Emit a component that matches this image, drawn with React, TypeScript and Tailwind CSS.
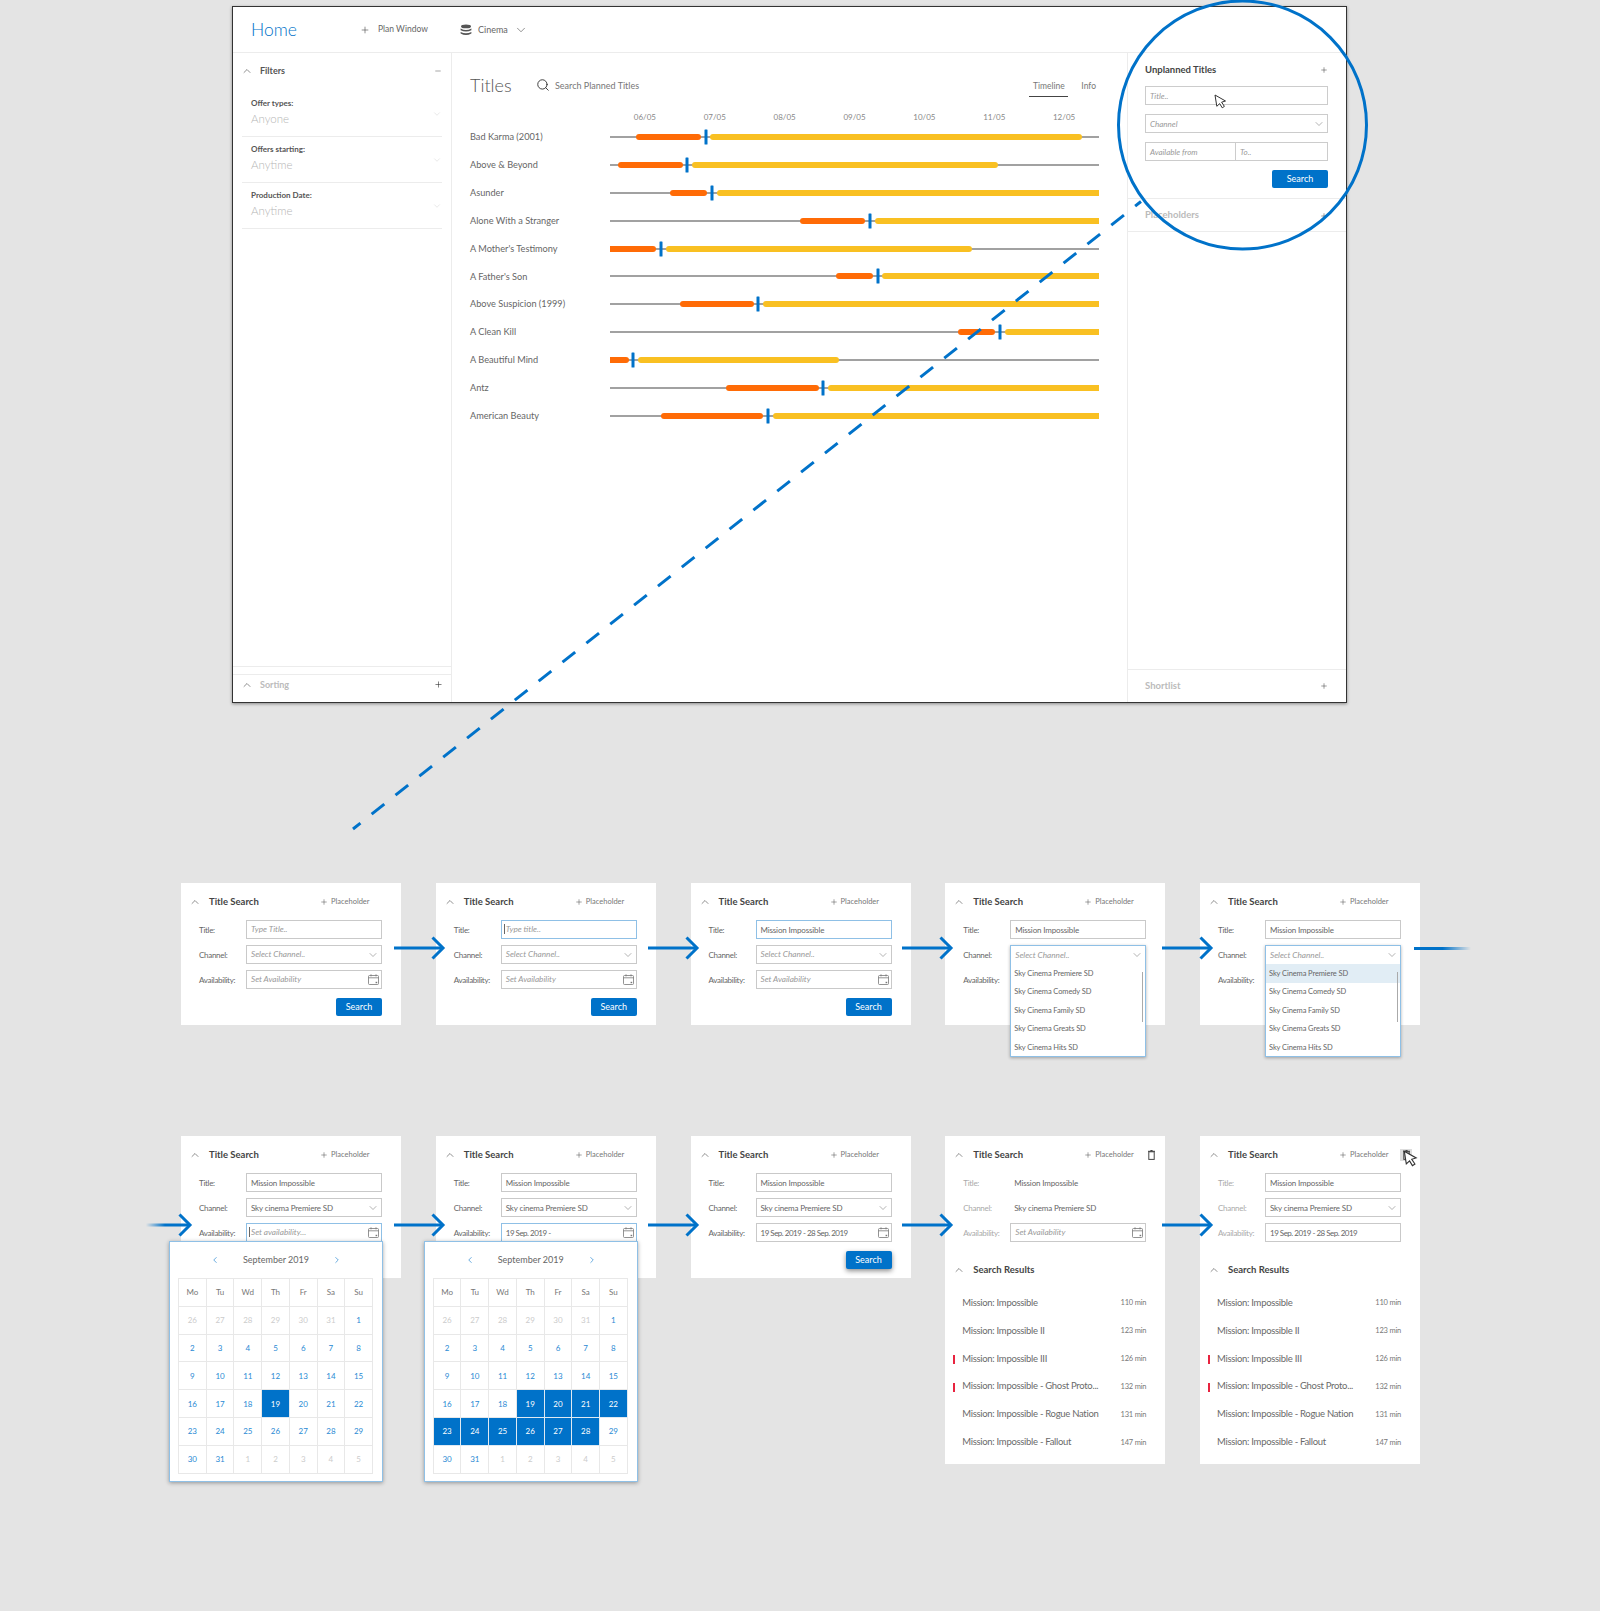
import { ChevronDown, ChevronLeft, ChevronRight, ChevronUp, Minus, Plus, Search } from 'lucide-react';
import type { ReactNode } from 'react';

const BLUE = '#0072c9';

const titles: [string, number, number, number, number, number][] = [
  ['Bad Karma (2001)', 636, 701, 706, 710, 1082],
  ['Above & Beyond', 618, 683, 687, 692, 998],
  ['Asunder', 670, 707, 712, 717, 1110],
  ['Alone With a Stranger', 800, 865, 870, 875, 1110],
  ["A Mother's Testimony", 600, 656, 661, 666, 972],
  ["A Father's Son", 836, 873, 878, 882, 1110],
  ['Above Suspicion (1999)', 680, 754, 758, 763, 1110],
  ['A Clean Kill', 958, 995, 1000, 1005, 1110],
  ['A Beautiful Mind', 600, 629, 633, 638, 839],
  ['Antz', 726, 819, 823, 828, 1110],
  ['American Beauty', 661, 763, 768, 773, 1110],
];

const dates = ['06/05', '07/05', '08/05', '09/05', '10/05', '11/05', '12/05'];

const channels = ['Sky Cinema Premiere SD', 'Sky Cinema Comedy SD', 'Sky Cinema Family SD', 'Sky Cinema Greats SD', 'Sky Cinema Hits SD'];

const results: [string, string, boolean][] = [
  ['Mission: Impossible', '110 min', false],
  ['Mission: Impossible II', '123 min', false],
  ['Mission: Impossible III', '126 min', true],
  ['Mission: Impossible - Ghost Proto...', '132 min', true],
  ['Mission: Impossible - Rogue Nation', '131 min', false],
  ['Mission: Impossible - Fallout', '147 min', false],
];

function CalendarIcon() {
  return (
    <svg width="11" height="11" viewBox="0 0 11 11" fill="none" stroke="#777" strokeWidth="0.8">
      <rect x="0.5" y="1.5" width="10" height="9" rx="1" />
      <path d="M0.5 3.8H10.5M3 0.3V2.4M8 0.3V2.4" />
      <rect x="7.6" y="7.8" width="1.6" height="1.4" fill="#777" stroke="none" />
    </svg>
  );
}

function TrashIcon() {
  return (
    <svg width="7" height="10" viewBox="0 0 7 10" fill="none" stroke="#444" strokeWidth="1">
      <rect x="0.8" y="1.8" width="5.4" height="7.6" />
      <path d="M0 1.3H7M2.4 0.5H4.6" />
    </svg>
  );
}

function StackIcon() {
  return (
    <svg width="12" height="12" viewBox="0 0 12 12" fill="#555">
      <ellipse cx="6" cy="2.4" rx="5" ry="1.9" />
      <path d="M0.6 4.6Q6 7.6 11.4 4.6V6.2Q6 9 0.6 6.2Z" />
      <path d="M0.6 7.9Q6 10.6 11.4 7.9V9.4Q6 12.6 0.6 9.4Z" />
    </svg>
  );
}

function Cursor({ className, size = 13 }: { className: string; size?: number }) {
  return (
    <svg className={className} width={size} height={size + 2} viewBox="0 0 13 15" fill="#fff" stroke="#333" strokeWidth="1">
      <path d="M1 1L11.5 7L7.6 8.2L10.4 12.4L8.2 13.8L5.7 9.6L2.8 12.3Z" />
    </svg>
  );
}

function Arrow({ className, fade }: { className: string; fade?: boolean }) {
  return (
    <svg className={className} width="52" height="24" viewBox="0 0 52 24" fill="none">
      <defs>
        <linearGradient id="fade-left" x1="0" x2="1" y1="0" y2="0">
          <stop offset="0.1" stopColor={BLUE} stopOpacity="0" />
          <stop offset="0.5" stopColor={BLUE} />
        </linearGradient>
      </defs>
      <rect x="0" y="10.5" width="48" height="3" fill={fade ? 'url(#fade-left)' : BLUE} />
      <path d="M38.5 1.5L49 12L38.5 22.5" stroke={BLUE} strokeWidth="3" />
    </svg>
  );
}

function Field({ label, muted, children }: { label: string; muted?: boolean; children?: ReactNode }) {
  return (
    <div className="flex items-center h-[19px]">
      <span className={`w-[47px] text-[8px] tracking-[-0.3px] ${muted ? 'text-[#aaa]' : 'text-[#666]'}`}>{label}</span>
      {children}
    </div>
  );
}

function Box({ children, focus, right, placeholder }: { children: ReactNode; focus?: boolean; right?: ReactNode; placeholder?: boolean }) {
  return (
    <div
      className={`w-[136px] h-[19px] flex items-center justify-between pl-[4px] pr-[2px] border bg-white ${
        focus ? 'border-[#8fc0e6]' : 'border-[#c9c9c9]'
      } ${placeholder ? 'italic text-[#999] text-[8.2px]' : 'text-[#666] text-[8px] tracking-[-0.15px]'}`}
    >
      <span className="flex items-center whitespace-nowrap">{children}</span>
      {right}
    </div>
  );
}

function Caret() {
  return <span className="w-px h-[10px] bg-[#666] mr-px -ml-[2px]" />;
}

function DateText({ children }: { children: ReactNode }) {
  return <span className="tracking-[-0.5px]">{children}</span>;
}

const Chev = <ChevronDown size={12} strokeWidth={1} color="#666" />;

function CardHeader({ trash, hover }: { trash?: boolean; hover?: boolean }) {
  return (
    <div className="flex items-center h-[12px] pl-[8px] relative">
      <ChevronUp size={12} strokeWidth={1.2} color="#444" />
      <span className="ml-[8px] w-[111px] text-[9.5px] font-bold text-[#444]">Title Search</span>
      <Plus size={8} strokeWidth={1.6} color="#555" className="mr-[3px]" />
      <span className="text-[7.5px] text-[#777]">Placeholder</span>
      {trash && (
        <span className={`absolute left-[200px] top-0 w-[12px] h-[12px] flex items-center justify-center ${hover ? 'bg-[#ddd]' : ''}`}>
          <TrashIcon />
        </span>
      )}
    </div>
  );
}

function Card({ children, header }: { children: ReactNode; header?: ReactNode }) {
  return (
    <div className="relative w-[220px] bg-white pt-[13px] shrink-0">
      {header ?? <CardHeader />}
      {children}
    </div>
  );
}

function Fields({ title, channel, avail }: { title: ReactNode; channel?: ReactNode; avail?: ReactNode }) {
  return (
    <div className="mt-[12px] ml-[18px] flex flex-col gap-[6px]">
      <Field label="Title:">{title}</Field>
      <Field label="Channel:">{channel}</Field>
      <Field label="Availability:">{avail}</Field>
    </div>
  );
}

function SearchButton({ shadow }: { shadow?: boolean }) {
  return (
    <div className="flex justify-end pr-[19px] pt-[9px] pb-[9px]">
      <button className={`w-[46px] h-[18px] rounded-[2px] bg-[#0072c9] text-white text-[9px] ${shadow ? 'shadow-[0_2px_5px_rgba(0,0,0,0.45)]' : ''}`}>
        Search
      </button>
    </div>
  );
}

function Dropdown({ highlight }: { highlight?: boolean }) {
  return (
    <div className="absolute left-[65px] top-[62px] w-[136px] h-[112px] bg-white border border-[#8fc0e6] shadow-[0_1px_3px_rgba(0,0,0,0.3)]">
      <div className="h-[18px] flex items-center justify-between pl-[4px] pr-[2px] italic text-[8.2px] text-[#999]">
        Select Channel..
        {Chev}
      </div>
      {channels.map((c, i) => (
        <div
          key={c}
          className={`h-[18.5px] flex items-center pl-[3px] text-[7.5px] tracking-[-0.1px] text-[#666] ${highlight && i === 0 ? 'bg-[#e1edf5]' : ''}`}
        >
          {c}
        </div>
      ))}
      <span className="absolute right-[2px] top-[26px] w-px h-[50px] bg-[#aaa]" />
    </div>
  );
}

function CalendarPopup({ selected }: { selected: number[] }) {
  const prev = [26, 27, 28, 29, 30, 31];
  const next = [1, 2, 3, 4, 5];
  const days = Array.from({ length: 31 }, (_, i) => i + 1);
  return (
    <div className="absolute left-[-12px] top-[105px] w-[214px] h-[241px] bg-white border border-[#8fc0e6] shadow-[0_1px_4px_rgba(0,0,0,0.35)] pt-[36px] px-[8px]">
      <div className="absolute left-0 right-0 top-[11px] flex items-center justify-center text-[9px] text-[#666]">
        <ChevronLeft size={10} strokeWidth={1.4} color={BLUE} />
        <span className="w-[112px] text-center">September 2019</span>
        <ChevronRight size={10} strokeWidth={1.4} color={BLUE} />
      </div>
      <div className="grid grid-cols-7 w-[195px] border-t border-l border-[#e8e8e8]">
        {['Mo', 'Tu', 'Wd', 'Th', 'Fr', 'Sa', 'Su'].map((d) => (
          <div key={d} className="h-[27.8px] flex items-center justify-center border-r border-b border-[#e8e8e8] text-[8px] text-[#777]">
            {d}
          </div>
        ))}
        {prev.map((d) => (
          <div key={`p${d}`} className="h-[27.8px] flex items-center justify-center border-r border-b border-[#e8e8e8] text-[8px] text-[#ccc]">
            {d}
          </div>
        ))}
        {days.map((d) => (
          <div
            key={d}
            className={`h-[27.8px] flex items-center justify-center border-r border-b text-[8px] ${
              selected.includes(d) ? 'bg-[#0072c9] text-white border-[#dfe9f2]' : 'text-[#2a8ad4] border-[#e8e8e8]'
            }`}
          >
            {d}
          </div>
        ))}
        {next.map((d) => (
          <div key={`n${d}`} className="h-[27.8px] flex items-center justify-center border-r border-b border-[#e8e8e8] text-[8px] text-[#ccc]">
            {d}
          </div>
        ))}
      </div>
    </div>
  );
}

function Results() {
  return (
    <>
      <div className="flex items-center h-[12px] pl-[8px] mt-[22px]">
        <ChevronUp size={12} strokeWidth={1.2} color="#444" />
        <span className="ml-[8px] text-[9.5px] font-bold text-[#444]">Search Results</span>
      </div>
      <div className="mt-[13px] pb-[8px]">
        {results.map(([name, min, flagged]) => (
          <div key={name} className="relative h-[27.9px] flex items-center justify-between pl-[17px] pr-[19px]">
            {flagged && <span className="absolute left-[8px] top-[10px] w-[1.5px] h-[9px] bg-[#e8233f]" />}
            <span className="text-[9.5px] tracking-[-0.3px] text-[#6a6a6a]">{name}</span>
            <span className="text-[7.5px] tracking-[-0.2px] text-[#777]">{min}</span>
          </div>
        ))}
      </div>
    </>
  );
}

function SidebarFilter({ label, value }: { label: string; value: string }) {
  return (
    <div className="h-[46px] mx-[9px] border-b border-[#ececec] pl-[9px] pt-[7px] relative">
      <div className="text-[8px] leading-[10px] font-bold text-[#555]">{label}</div>
      <div className="text-[11.5px] leading-[21px] font-light text-[#b5b5b5]">{value}</div>
      <ChevronDown size={10} strokeWidth={0.8} color="#bbb" className="absolute right-[0px] top-[18px]" />
    </div>
  );
}

function MainWindow() {
  return (
    <div className="ml-[232px] mt-[6px] w-[1115px] h-[697px] bg-white border border-[#333] shadow-[0_1px_3px_rgba(0,0,0,0.4)] flex flex-col">
      <div className="h-[46px] shrink-0 flex items-center border-b border-[#ececec] pl-[18px]">
        <span className="w-[109px] pt-[1px] text-[17.5px] font-light text-[#0072c9]">Home</span>
        <Plus size={10} strokeWidth={1.4} color="#444" />
        <span className="ml-[8px] w-[82px] text-[8.5px] text-[#666]">Plan Window</span>
        <StackIcon />
        <span className="ml-[6px] w-[36px] text-[9px] text-[#666]">Cinema</span>
        <ChevronDown size={14} strokeWidth={1} color="#444" />
      </div>
      <div className="flex flex-1 min-h-0">
        <div className="w-[219px] shrink-0 border-r border-[#ececec] flex flex-col">
          <div className="h-[36px] flex items-center pl-[8px] pr-[9px]">
            <ChevronUp size={12} strokeWidth={1.2} color="#444" />
            <span className="ml-[7px] flex-1 text-[9px] font-bold text-[#555]">Filters</span>
            <Minus size={8} strokeWidth={1.4} color="#444" />
          </div>
          <div className="mt-[2px]">
            <SidebarFilter label="Offer types:" value="Anyone" />
            <SidebarFilter label="Offers starting:" value="Anytime" />
            <SidebarFilter label="Production Date:" value="Anytime" />
          </div>
          <div className="mt-auto h-[8px] border-t border-[#ececec]" />
          <div className="h-[28px] border-t border-[#ececec] flex items-center pl-[8px] pr-[8px] pb-[8px]">
            <ChevronUp size={12} strokeWidth={1.2} color="#444" />
            <span className="ml-[7px] flex-1 text-[9px] font-bold text-[#bbb]">Sorting</span>
            <Plus size={9} strokeWidth={1.6} color="#333" />
          </div>
        </div>
        <div className="flex-1 pl-[18px] pt-[21px]">
          <div className="flex items-center h-[22px]">
            <span className="w-[66px] text-[18px] font-light text-[#555]">Titles</span>
            <Search size={14} strokeWidth={1.6} color="#333" />
            <span className="ml-[5px] pt-[1px] text-[9px] text-[#777]">Search Planned Titles</span>
            <div className="ml-auto mr-[31px] flex items-start h-[23px] text-[8.5px] text-[#777]">
              <span className="w-[39px] h-[23px] text-center leading-[24px] border-b border-[#444]">Timeline</span>
              <span className="ml-[13px] leading-[24px]">Info</span>
            </div>
          </div>
          <div className="ml-[140px] w-[489px] mt-[14px] h-[14px] flex">
            {dates.map((d) => (
              <span key={d} className="w-[70px] text-center text-[8px] leading-[14px] text-[#888]">{d}</span>
            ))}
          </div>
          <div className="-mt-[1px]">
            {titles.map(([name, oStart, oEnd, tick, yStart, yEnd]) => (
              <div key={name} className="h-[27.9px] flex items-center">
                <span className="w-[140px] text-[9.2px] text-[#666]">{name}</span>
                <svg width="489" height="28" viewBox="610 0 489 28">
                  <rect x="610" y="13.5" width="489" height="1" fill="#444" />
                  <rect x={oStart} y="11" width={oEnd - oStart} height="6" rx="3" fill="#ff6b06" />
                  <rect x={yStart} y="11" width={yEnd - yStart} height="6" rx="3" fill="#f9c022" />
                  <rect x={tick - 1.5} y="6.5" width="3" height="15" rx="0.5" fill={BLUE} />
                </svg>
              </div>
            ))}
          </div>
        </div>
        <div className="w-[219px] shrink-0 border-l border-[#ececec] flex flex-col">
          <div className="pl-[17px] pr-[18px] pt-[11px] h-[146px] border-b border-[#ececec]">
            <div className="flex items-center justify-between h-[12px] text-[9.5px] font-bold text-[#444]">
              Unplanned Titles
              <Plus size={8} strokeWidth={1.6} color="#444" />
            </div>
            <div className="mt-[10px] h-[19px] border border-[#ccc] flex items-center pl-[4px] italic text-[8px] text-[#999]">Title..</div>
            <div className="mt-[9px] h-[19px] border border-[#ccc] flex items-center justify-between pl-[4px] pr-[2px] italic text-[8px] text-[#999]">
              Channel
              {Chev}
            </div>
            <div className="mt-[9px] h-[19px] border border-[#ccc] flex items-center italic text-[8px] text-[#999]">
              <span className="w-[90px] h-full pl-[4px] border-r border-[#ccc] flex items-center">Available from</span>
              <span className="pl-[4px]">To..</span>
            </div>
            <div className="flex justify-end mt-[9px]">
              <button className="w-[56px] h-[18px] rounded-[2px] bg-[#0072c9] text-white text-[9px]">Search</button>
            </div>
          </div>
          <div className="h-[33px] pt-[1px] border-b border-[#ececec] flex items-center justify-between pl-[17px] pr-[18px] text-[9.5px] font-bold text-[#bbb]">
            Placeholders
            <Plus size={8} strokeWidth={1.6} color="#444" />
          </div>
          <div className="mt-auto h-[33px] border-t border-[#ececec] flex items-center justify-between pl-[17px] pr-[18px] text-[9.5px] font-bold text-[#bbb]">
            Shortlist
            <Plus size={8} strokeWidth={1.6} color="#444" />
          </div>
        </div>
      </div>
    </div>
  );
}

export default function App() {
  const range = [19, 20, 21, 22, 23, 24, 25, 26, 27, 28];
  const mission = <Box>Mission Impossible</Box>;
  const skyChannel = <Box right={Chev}>Sky cinema Premiere SD</Box>;
  const selectChannel = <Box placeholder right={Chev}>Select Channel..</Box>;
  const setAvail = <Box placeholder right={<CalendarIcon />}>Set Availability</Box>;
  return (
    <div className="relative w-[1600px] h-[1611px] overflow-hidden bg-[#e4e4e4] font-['Lato',sans-serif]">
      <MainWindow />

      <div className="relative mt-[180px] h-[142px] flex gap-[34.75px] pl-[181px]">
        <Card>
          <Fields title={<Box placeholder>Type Title..</Box>} channel={selectChannel} avail={setAvail} />
          <SearchButton />
        </Card>
        <Card>
          <Fields
            title={<Box placeholder focus><Caret />Type title..</Box>}
            channel={selectChannel}
            avail={setAvail}
          />
          <SearchButton />
        </Card>
        <Card>
          <Fields title={<Box focus>Mission Impossible</Box>} channel={selectChannel} avail={setAvail} />
          <SearchButton />
        </Card>
        <Card>
          <Fields title={mission} />
          <div className="h-[36px]" />
          <Dropdown />
        </Card>
        <Card>
          <Fields title={mission} />
          <div className="h-[36px]" />
          <Dropdown highlight />
        </Card>
        <Arrow className="absolute left-[394px] top-[53px]" />
        <Arrow className="absolute left-[648px] top-[53px]" />
        <Arrow className="absolute left-[902px] top-[53px]" />
        <Arrow className="absolute left-[1162px] top-[53px]" />
        <div className="absolute left-[1414px] top-[63.5px] w-[57px] h-[3px] bg-gradient-to-r from-[#0072c9] from-50% to-transparent" />
      </div>

      <div className="relative mt-[111px] h-[142px] flex items-start gap-[34.75px] pl-[181px]">
        <Card>
          <Fields
            title={mission}
            channel={skyChannel}
            avail={<Box placeholder focus right={<CalendarIcon />}><Caret />Set availability...</Box>}
          />
          <div className="h-[36px]" />
          <CalendarPopup selected={[19]} />
        </Card>
        <Card>
          <Fields
            title={mission}
            channel={skyChannel}
            avail={<Box focus right={<CalendarIcon />}><DateText>19 Sep. 2019 -</DateText></Box>}
          />
          <div className="h-[36px]" />
          <CalendarPopup selected={range} />
        </Card>
        <Card>
          <Fields
            title={mission}
            channel={skyChannel}
            avail={<Box right={<CalendarIcon />}><DateText>19 Sep. 2019 - 28 Sep. 2019</DateText></Box>}
          />
          <SearchButton shadow />
        </Card>
        <Card header={<CardHeader trash />}>
          <div className="mt-[12px] ml-[18px] flex flex-col gap-[6px]">
            <Field label="Title:" muted><span className="ml-[4px] text-[8px] tracking-[-0.15px] text-[#666]">Mission Impossible</span></Field>
            <Field label="Channel:" muted><span className="ml-[4px] text-[8px] tracking-[-0.15px] text-[#666]">Sky cinema Premiere SD</span></Field>
            <Field label="Availability:" muted>
              <Box placeholder right={<CalendarIcon />}>Set Availability</Box>
            </Field>
          </div>
          <Results />
        </Card>
        <Card header={<CardHeader trash hover />}>
          <div className="mt-[12px] ml-[18px] flex flex-col gap-[6px]">
            <Field label="Title:" muted>{mission}</Field>
            <Field label="Channel:" muted>{skyChannel}</Field>
            <Field label="Availability:" muted><Box><DateText>19 Sep. 2019 - 28 Sep. 2019</DateText></Box></Field>
          </div>
          <Results />
          <Cursor className="absolute left-[203px] top-[14px]" size={15} />
        </Card>
        <Arrow className="absolute left-[141px] top-[77px]" fade />
        <Arrow className="absolute left-[394px] top-[77px]" />
        <Arrow className="absolute left-[648px] top-[77px]" />
        <Arrow className="absolute left-[902px] top-[77px]" />
        <Arrow className="absolute left-[1162px] top-[77px]" />
      </div>

      {/* circle and dashed line sit over the whole board */}
      <svg className="absolute left-0 top-0 pointer-events-none" width="1600" height="1611" fill="none">
        <line x1="1141" y1="201.5" x2="353" y2="829" stroke={BLUE} strokeWidth="3" strokeDasharray="16.2 14.3" strokeDashoffset="8.7" />
        <circle cx="1242.5" cy="125" r="124" stroke={BLUE} strokeWidth="3" />
      </svg>
      <Cursor className="absolute left-[1214px] top-[94px]" />
    </div>
  );
}
